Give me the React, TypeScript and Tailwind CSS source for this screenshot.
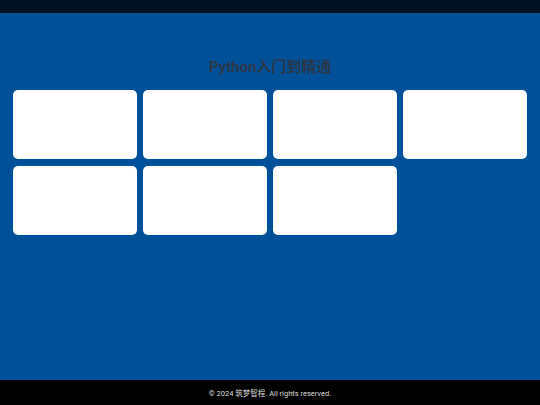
const courses = Array.from({ length: 7 }, (_, i) => i);

export default function App() {
    return (
        <div className="flex h-screen w-full flex-col font-['Roboto','Noto_Sans_CJK_SC',sans-serif]">
            {/* Top bar */}
            <div className="h-[13px] w-full bg-[#00111f]" />

            {/* Content */}
            <main className="flex-1 bg-[#00509a] px-[13px] pt-[44px]">
                <h1 className="mb-[13px] text-center text-[15px] font-bold leading-[20px] text-[#2b3647]">
                    Python入门到精通
                </h1>
                <div className="grid grid-cols-4 gap-x-[6px] gap-y-[7px]">
                    {courses.map((c) => (
                        <div key={c} className="h-[69px] rounded-[5px] bg-white" />
                    ))}
                </div>
            </main>

            {/* Footer */}
            <footer className="flex h-[25px] items-center justify-center bg-black pt-[3px]">
                <p className="text-[7.5px] text-[#dddddd]">© 2024 筑梦智程. All rights reserved.</p>
            </footer>
        </div>
    );
}
